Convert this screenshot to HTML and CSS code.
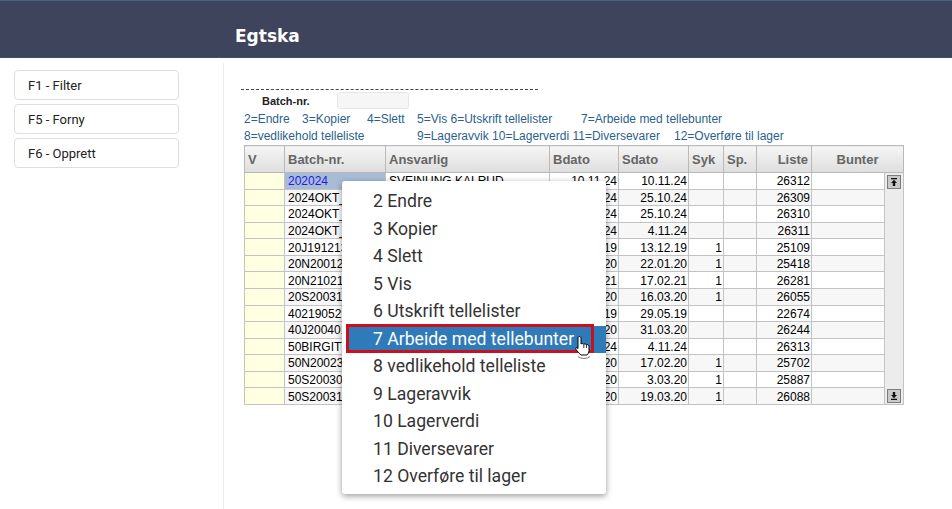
FILE: index.html
```html
<!DOCTYPE html>
<html lang="no">
<head>
    <meta charset="UTF-8">
    <meta name="viewport" content="width=device-width, initial-scale=1.0">
    <title>Egtska</title>
    <link rel="stylesheet" href="styles.css">
</head>
<body>
    <header class="topbar">
        <h1>Egtska</h1>
    </header>

    <div class="main">
        <!-- Function keys -->
        <aside class="sidebar">
            <button class="fkey">F1 - Filter</button>
            <button class="fkey">F5 - Forny</button>
            <button class="fkey">F6 - Opprett</button>
        </aside>

        <section class="content">
            <div class="dashline"></div>
            <div class="search">
                <label for="batch">Batch-nr.</label>
                <input id="batch" type="text">
            </div>

            <div class="legend">
                <div class="legend-row first">
                    <span>2=Endre</span>
                    <span>3=Kopier</span>
                    <span>4=Slett</span>
                    <span>5=Vis 6=Utskrift tellelister</span>
                    <span>7=Arbeide med tellebunter</span>
                </div>
                <div class="legend-row second">
                    <span>8=vedlikehold telleliste</span>
                    <span>9=Lageravvik 10=Lagerverdi 11=Diversevarer</span>
                    <span>12=Overføre til lager</span>
                </div>
            </div>

            <table class="grid">
                <colgroup>
                    <col class="c-v">
                    <col class="c-batch">
                    <col class="c-ansv">
                    <col class="c-bdato">
                    <col class="c-sdato">
                    <col class="c-syk">
                    <col class="c-sp">
                    <col class="c-liste">
                    <col class="c-bunter">
                    <col class="c-scroll">
                </colgroup>
                <thead>
                    <tr>
                        <th>V</th>
                        <th>Batch-nr.</th>
                        <th>Ansvarlig</th>
                        <th>Bdato</th>
                        <th>Sdato</th>
                        <th>Syk</th>
                        <th>Sp.</th>
                        <th class="num">Liste</th>
                        <th class="mid" colspan="2">Bunter</th>
                    </tr>
                </thead>
                <tbody>
                    <tr>
                        <td class="v"></td><td class="sel">202024</td><td>SVEINUNG KALRUD</td><td class="num">10.11.24</td><td class="num">10.11.24</td><td class="num"></td><td></td><td class="num">26312</td><td></td>
                        <td class="scroll" rowspan="14">
                            <div class="scroll-track">
                                <span class="sbtn">
                                    <svg width="8" height="8" viewBox="0 0 8 8"><rect x="1" y="0" width="6" height="1.3" fill="#111"/><path d="M4 1.8 L7 5 H5.2 V8 H2.8 V5 H1 Z" fill="#111"/></svg>
                                </span>
                                <span class="sbtn">
                                    <svg width="8" height="8" viewBox="0 0 8 8"><rect x="1" y="6.7" width="6" height="1.3" fill="#111"/><path d="M4 6.2 L7 3 H5.2 V0 H2.8 V3 H1 Z" fill="#111"/></svg>
                                </span>
                            </div>
                        </td>
                    </tr>
                    <tr><td class="v"></td><td>2024OKT_1</td><td></td><td class="num">25.10.24</td><td class="num">25.10.24</td><td class="num"></td><td></td><td class="num">26309</td><td></td></tr>
                    <tr><td class="v"></td><td>2024OKT_2</td><td></td><td class="num">25.10.24</td><td class="num">25.10.24</td><td class="num"></td><td></td><td class="num">26310</td><td></td></tr>
                    <tr><td class="v"></td><td>2024OKT_3</td><td></td><td class="num">4.11.24</td><td class="num">4.11.24</td><td class="num"></td><td></td><td class="num">26311</td><td></td></tr>
                    <tr><td class="v"></td><td>20J191213</td><td></td><td class="num">13.12.19</td><td class="num">13.12.19</td><td class="num">1</td><td></td><td class="num">25109</td><td></td></tr>
                    <tr><td class="v"></td><td>20N200122</td><td></td><td class="num">22.01.20</td><td class="num">22.01.20</td><td class="num">1</td><td></td><td class="num">25418</td><td></td></tr>
                    <tr><td class="v"></td><td>20N210217</td><td></td><td class="num">17.02.21</td><td class="num">17.02.21</td><td class="num">1</td><td></td><td class="num">26281</td><td></td></tr>
                    <tr><td class="v"></td><td>20S200316</td><td></td><td class="num">16.03.20</td><td class="num">16.03.20</td><td class="num">1</td><td></td><td class="num">26055</td><td></td></tr>
                    <tr><td class="v"></td><td>402190529</td><td></td><td class="num">29.05.19</td><td class="num">29.05.19</td><td class="num"></td><td></td><td class="num">22674</td><td></td></tr>
                    <tr><td class="v"></td><td>40J200401</td><td></td><td class="num">31.03.20</td><td class="num">31.03.20</td><td class="num"></td><td></td><td class="num">26244</td><td></td></tr>
                    <tr><td class="v"></td><td>50BIRGITTE</td><td></td><td class="num">4.11.24</td><td class="num">4.11.24</td><td class="num"></td><td></td><td class="num">26313</td><td></td></tr>
                    <tr><td class="v"></td><td>50N200230</td><td></td><td class="num">17.02.20</td><td class="num">17.02.20</td><td class="num">1</td><td></td><td class="num">25702</td><td></td></tr>
                    <tr><td class="v"></td><td>50S200303</td><td></td><td class="num">3.03.20</td><td class="num">3.03.20</td><td class="num">1</td><td></td><td class="num">25887</td><td></td></tr>
                    <tr><td class="v"></td><td>50S200319</td><td></td><td class="num">19.03.20</td><td class="num">19.03.20</td><td class="num">1</td><td></td><td class="num">26088</td><td></td></tr>
                </tbody>
            </table>
        </section>
    </div>

    <!-- Context menu over the grid -->
    <ul class="ctxmenu">
        <li>2 Endre</li>
        <li>3 Kopier</li>
        <li>4 Slett</li>
        <li>5 Vis</li>
        <li>6 Utskrift tellelister</li>
        <li class="active">7 Arbeide med tellebunter</li>
        <li>8 vedlikehold telleliste</li>
        <li>9 Lageravvik</li>
        <li>10 Lagerverdi</li>
        <li>11 Diversevarer</li>
        <li>12 Overføre til lager</li>
    </ul>
    <div class="mark"></div>
    <svg class="cursor" width="20" height="26" viewBox="0 0 20 26">
        <path d="M4 21.5 A7 4 0 0 0 16 21.5" fill="none" stroke="#777" stroke-width="1"/>
        <path d="M5.5 1.5 C6.3 1.5 7 2.1 7 3 V9 C7.5 8.4 9.5 8.4 9.8 9.3 C10.3 8.7 12.2 8.8 12.5 9.8 C13 9.3 15 9.5 15 11 V15.5 C15 17.5 14 19 13 20 H6.8 C5.8 18.8 3.5 16.5 2 14.5 C1.3 13.5 2 12.3 3.2 12.8 L4 13.6 V3 C4 2.1 4.7 1.5 5.5 1.5 Z" fill="#fff" stroke="#000" stroke-width="1"/>
        <path d="M9.8 9.3 V13 M12.5 9.8 V13" stroke="#000" stroke-width="0.8"/>
    </svg>
</body>
</html>
```

FILE: styles.css
```css
body {
    margin: 0;
    padding: 0;
    background-color: #fff;
    font-family: "Liberation Sans", Arial, sans-serif;
    color: #000;
}
.topbar {
    height: 56px;
    background-color: #3f445d;
    border-top: 1px solid #46637f;
    border-bottom: 1px solid #3b5470;
    box-sizing: content-box;
}
.topbar h1 {
    margin: 0;
    padding: 25px 0 0 235px;
    font-family: "DejaVu Sans", Verdana, sans-serif;
    font-size: 17px;
    font-weight: bold;
    line-height: 20px;
    color: #fff;
}
.main {
    display: flex;
}
.sidebar {
    width: 224px;
    flex-shrink: 0;
    padding: 7px 0 0 14px;
    display: flex;
    flex-direction: column;
    gap: 4px;
    border-right: 1px solid #ececec;
    margin-top: 5px;
    height: 446px;
    box-sizing: border-box;
}
.fkey {
    width: 165px;
    height: 30px;
    padding: 0 0 0 13px;
    text-align: left;
    font-family: Roboto, sans-serif;
    font-size: 13px;
    color: #222;
    background-color: #fff;
    border: 1px solid #dedede;
    border-radius: 4px;
}
.content {
    padding: 31px 0 0 17px;
}
.dashline {
    width: 297px;
    border-top: 1px dashed #444;
}
.search {
    display: flex;
    align-items: center;
    height: 17px;
    margin-top: 2px;
    padding-left: 21px;
}
.search label {
    width: 75px;
    font-size: 11px;
    font-weight: bold;
    color: #222;
}
.search input {
    width: 72px;
    height: 17px;
    padding: 0;
    box-sizing: border-box;
    background-color: #f6f6f6;
    border: 1px solid #e6e6e6;
    border-radius: 3px;
}
.legend {
    margin-left: 3px;
    padding-top: 2px;
    font-size: 12px;
    color: #2c5f8e;
    line-height: 16.5px;
}
.legend-row {
    display: flex;
    white-space: nowrap;
}
.legend-row.first span:nth-child(1) { width: 58px; }
.legend-row.first span:nth-child(2) { width: 65px; }
.legend-row.first span:nth-child(3) { width: 50px; }
.legend-row.first span:nth-child(4) { width: 164px; }
.legend-row.second span:nth-child(1) { width: 173px; }
.legend-row.second span:nth-child(2) { width: 257px; }
.grid {
    margin: 1px 0 0 3px;
    width: 659px;
    table-layout: fixed;
    border-collapse: collapse;
    border: 1px solid #b9b9b9;
    font-size: 12px;
}
.c-v { width: 40px; }
.c-batch { width: 101px; }
.c-ansv { width: 164px; }
.c-bdato { width: 69px; }
.c-sdato { width: 70px; }
.c-syk { width: 35px; }
.c-sp { width: 33px; }
.c-liste { width: 55px; }
.c-bunter { width: 73px; }
.c-scroll { width: 19px; }
.grid thead tr {
    height: 27px;
}
.grid th {
    text-align: left;
    padding: 1px 3px 0;
    font-size: 13px;
    font-weight: bold;
    color: #666;
    background: linear-gradient(#f5f5f5, #dedede);
    border: 1px solid #b9b9b9;
}
.grid th.num { text-align: right; }
.grid th.mid { text-align: center; }
.grid tbody tr {
    height: 16.5px;
}
.grid tbody tr:nth-child(even) td {
    background-color: #f7f7f7;
}
.grid td {
    padding: 1px 2px 0 3px;
    border: 1px solid #c3c3c3;
    white-space: nowrap;
    overflow: hidden;
    line-height: 14px;
}
.grid td.num { text-align: right; padding: 1px 1px 0 2px; }
.grid tbody tr td.v { background-color: #ffffe1; }
.grid tbody tr td.sel {
    background-color: #a8bcd6;
    color: #1c1ce6;
}
.grid tbody tr td.scroll {
    padding: 0;
    background-color: #ececec;
    vertical-align: top;
    border-top: 1px solid #c3c3c3;
}
.scroll-track {
    height: 231px;
    display: flex;
    flex-direction: column;
    justify-content: space-between;
    align-items: center;
    padding: 2px 0 1px;
    box-sizing: border-box;
}
.sbtn {
    width: 14px;
    height: 14px;
    box-sizing: border-box;
    display: flex;
    align-items: center;
    justify-content: center;
    background-color: #c9c9c9;
    border: 1px solid #7d7d7d;
}
.ctxmenu {
    position: absolute;
    left: 342px;
    top: 181px;
    width: 264px;
    margin: 0;
    padding: 7px 0 3px;
    list-style: none;
    background-color: #fff;
    border-radius: 3px;
    box-shadow: 0 2px 6px rgba(0, 0, 0, 0.4);
    font-family: Roboto, sans-serif;
    font-size: 17.6px;
    color: #333;
}
.ctxmenu li {
    height: 27.5px;
    line-height: 27.5px;
    padding-left: 31px;
}
.ctxmenu li.active {
    background-color: #2f7ab8;
    color: #fff;
    margin-left: 5px;
    padding-left: 26px;
}
.mark {
    position: absolute;
    left: 346px;
    top: 324px;
    width: 248px;
    height: 29px;
    box-sizing: border-box;
    border: 3px solid #c8101e;
}
.cursor {
    position: absolute;
    left: 574px;
    top: 335px;
}
```
